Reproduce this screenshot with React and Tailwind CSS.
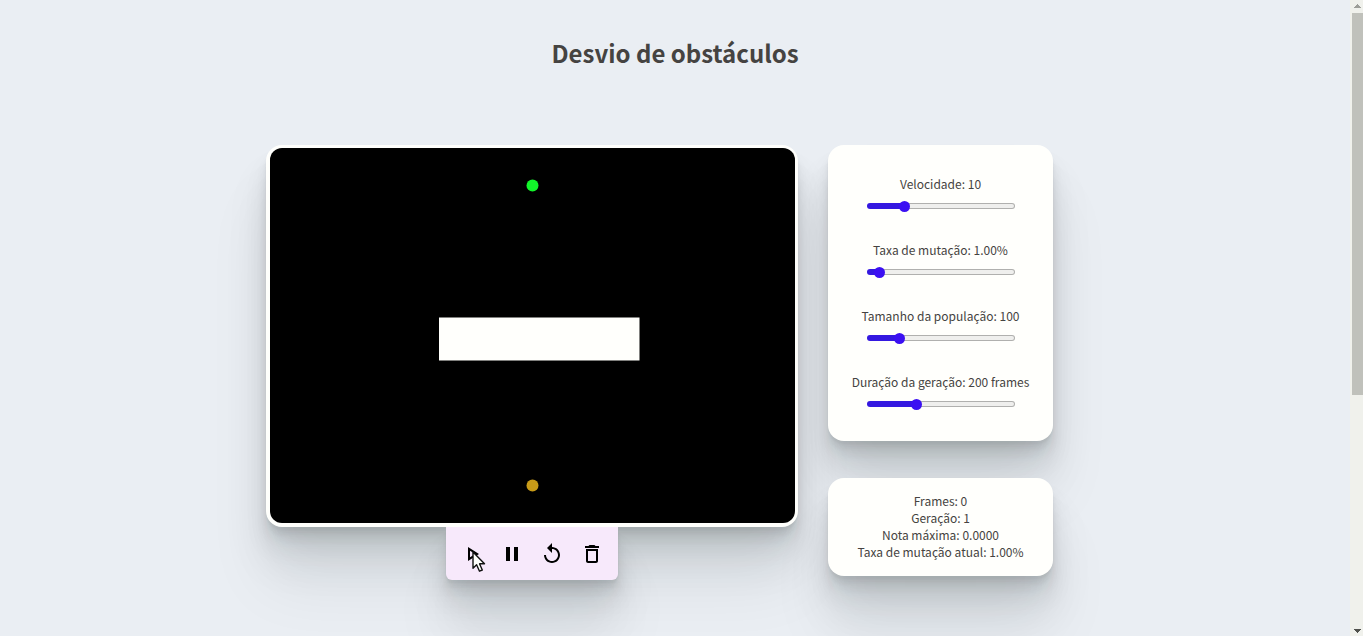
import { useState } from "react";
import { MdDeleteOutline, MdOutlinePlayArrow, MdPause, MdReplay } from "react-icons/md";

const SHADOW =
  "shadow-[0_3px_2px_rgba(10,24,24,0.034),0_7px_5px_rgba(10,24,24,0.04),0_12px_12px_rgba(10,24,24,0.06),0_20px_24px_rgba(10,24,24,0.07),0_34px_44px_rgba(10,24,24,0.08),0_56px_64px_rgba(10,24,24,0.07)]";

const SLIDERS = [
  { id: "velocidade", name: "Velocidade", min: 1, max: 40, step: 1, value: 10, format: (v) => v },
  { id: "mutacao", name: "Taxa de mutação", min: 0, max: 20, step: 0.1, value: 1, format: (v) => `${v.toFixed(2)}%` },
  { id: "populacao", name: "Tamanho da população", min: 4, max: 500, step: 1, value: 100, format: (v) => v },
  { id: "duracao", name: "Duração da geração", min: 10, max: 600, step: 1, value: 200, format: (v) => `${v} frames` },
];

function Slider({ id, name, min, max, step, value, format }) {
  const [current, setCurrent] = useState(value);
  const filled = ((current - min) / (max - min)) * 94 + 3;
  return (
    <div className="flex flex-col items-center gap-[11px]">
      <label htmlFor={id} className="whitespace-nowrap">
        {name}: {format(current)}
      </label>
      <input
        id={id}
        type="range"
        min={min}
        max={max}
        step={step}
        value={current}
        onChange={(e) => setCurrent(Number(e.target.value))}
        className="h-[6px] w-[148px] appearance-none rounded-full border border-transparent [&::-webkit-slider-thumb]:size-[11px] [&::-webkit-slider-thumb]:appearance-none [&::-webkit-slider-thumb]:rounded-full [&::-webkit-slider-thumb]:bg-[#3b10f2]"
        style={{
          background: `linear-gradient(to right, #3418e0 ${filled}%, transparent ${filled}%) border-box, linear-gradient(#efefed, #efefed) padding-box, linear-gradient(#b0b0ae, #b0b0ae) border-box`,
        }}
      />
    </div>
  );
}

function ToolButton({ label, icon: Icon }) {
  return (
    <button type="button" aria-label={label} className="flex size-10 items-center justify-center text-black">
      <Icon size={24} />
    </button>
  );
}

function Simulation() {
  return (
    <svg viewBox="0 0 525 375" className="block h-[375px] w-[525px] rounded-xl bg-black" role="img" aria-label="Simulação">
      <circle cx="262.5" cy="37.5" r="6" fill="#12f52a" />
      <rect x="169" y="169.5" width="200.5" height="43" fill="#fffffc" />
      <circle cx="262.5" cy="337.5" r="6" fill="#c89b18" />
    </svg>
  );
}

function Scrollbar() {
  return (
    <div aria-hidden="true" className="flex w-[13px] shrink-0 flex-col bg-[#f0f1ec] pl-[2px]">
      <svg viewBox="0 0 11 13" className="h-[13px] w-[11px]" shapeRendering="crispEdges">
        <path d="M5 4h1v1h1v1h1v1h1v1H2V7h1V6h1V5h1z" fill="#9d9e99" />
      </svg>
      <div className="flex-[382] bg-[#c0c1bb]" />
      <div className="flex-[228]" />
      <svg viewBox="0 0 11 13" className="h-[13px] w-[11px]" shapeRendering="crispEdges">
        <path d="M2 6h7v1H8v1H7v1H6v1H5V9H4V8H3V7H2z" fill="#50514d" />
      </svg>
    </div>
  );
}

export default function App() {
  return (
    <div className="flex h-screen bg-[#eaeef3] font-['Noto_Sans_CJK_SC','Noto_Sans',sans-serif] text-xs leading-[17px] text-[#454341]">
      <main className="min-w-0 flex-1 overflow-hidden">
        <h1 className="pt-[35px] text-center text-2xl leading-9 font-bold">Desvio de obstáculos</h1>
        <div className="mt-[74px] flex items-start justify-center">
          <section className="mr-[30px] flex flex-col items-center">
            <div className={`rounded-2xl border-t-3 border-r-3 border-b-4 border-l-4 border-[#fffffc] bg-[#fffffc] ${SHADOW}`}>
              <Simulation />
            </div>
            <div className={`relative flex rounded-b-md bg-[#f7e9fb] px-[6px] py-[7px] pb-[6px] ${SHADOW}`}>
              <ToolButton label="Iniciar" icon={MdOutlinePlayArrow} />
              <ToolButton label="Pausar" icon={MdPause} />
              <ToolButton label="Reiniciar" icon={MdReplay} />
              <ToolButton label="Apagar" icon={MdDeleteOutline} />
              <svg viewBox="0 0 14 22" className="pointer-events-none absolute top-6 left-[26px] h-[22px] w-[14px]">
                <path
                  d="M1 1v16.2l3.6-3.4 2.9 6.4 2.8-1.2-2.8-6.2h5z"
                  fill="#fffffc"
                  stroke="#111"
                  strokeWidth="1.4"
                  strokeLinejoin="round"
                />
              </svg>
            </div>
          </section>
          <aside className="mr-[31px] flex w-[225px] flex-col gap-[37px]">
            <div className={`flex flex-col gap-8 rounded-2xl bg-[#fffffc] pt-[30px] pb-[34px] ${SHADOW}`}>
              {SLIDERS.map((slider) => (
                <Slider key={slider.id} {...slider} />
              ))}
            </div>
            <div className={`rounded-2xl bg-[#fffffc] pt-[14px] pb-4 text-center ${SHADOW}`}>
              <p>Frames: 0</p>
              <p>Geração: 1</p>
              <p>Nota máxima: 0.0000</p>
              <p>Taxa de mutação atual: 1.00%</p>
            </div>
          </aside>
        </div>
      </main>
      <Scrollbar />
    </div>
  );
}
